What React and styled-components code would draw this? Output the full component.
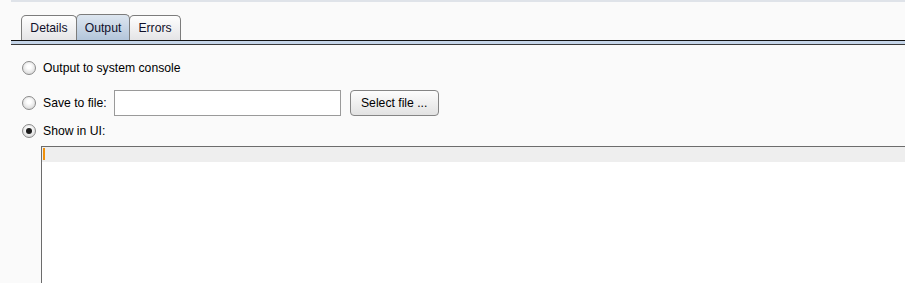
import React from "react"
import styled, { createGlobalStyle } from 'styled-components'

const GlobalStyle = createGlobalStyle`
    html, body {
        margin: 0;
        padding: 0;
        background: #fafafa;
        overflow: hidden;
    }
    body {
        font-family: "Liberation Sans", Arial, sans-serif;
        font-size: 12.2px;
        color: #000;
    }
`

const Page = styled.div`
    width: 905px;
    height: 283px;
    overflow: hidden;
`

const TopLine = styled.div`
    height: 2px;
    margin-left: 11px;
    background: #dfe3e9;
`

const TabStrip = styled.div`
    height: 38px;
    display: flex;
    align-items: flex-end;
    padding-left: 21px;
`

const Tab = styled.div`
    box-sizing: border-box;
    width: ${p => p.w}px;
    height: ${p => p.selected ? 26 : 25}px;
    margin-left: ${p => p.first ? 0 : -1}px;
    display: flex;
    align-items: center;
    justify-content: center;
    border: 1px solid #7c7c7c;
    border-bottom: none;
    border-radius: 5px 5px 0 0;
    background: ${p => p.selected
        ? 'linear-gradient(#dde6f0, #b3c5da)'
        : 'linear-gradient(#fefefe, #e4e4e6)'};
    color: #10102a;
    position: relative;
    z-index: ${p => p.selected ? 1 : 0};
`

const TabUnderline = styled.div`
    margin-left: 11px;
    height: 3px;
    border-top: 1px solid #111;
    border-bottom: 1px solid #3a3a3a;
    background: #c4d4e8;
`

const Options = styled.div`
    padding-left: 22px;
    display: flex;
    flex-direction: column;
`

const Row = styled.div`
    display: flex;
    align-items: center;
    height: ${p => p.h}px;
    margin-top: ${p => p.mt}px;
`

const Radio = styled.span`
    box-sizing: border-box;
    width: 14px;
    height: 14px;
    border-radius: 50%;
    border: 1px solid #8a8a8a;
    background: radial-gradient(circle at 50% 40%, #ffffff 20%, #e6e6e6 60%, #c9c9c9 100%);
    display: flex;
    align-items: center;
    justify-content: center;
    flex-shrink: 0;

    &::after {
        content: '';
        display: ${p => p.checked ? 'block' : 'none'};
        width: 6px;
        height: 6px;
        border-radius: 50%;
        background: #1c1c1c;
    }
`

const Label = styled.span`
    margin-left: 7px;
    white-space: nowrap;
`

const FileField = styled.div`
    box-sizing: border-box;
    width: 227px;
    height: 26px;
    margin-left: 7px;
    border: 1px solid #9a9a9a;
    background: #fff;
`

const Button = styled.div`
    box-sizing: border-box;
    width: 89px;
    height: 26px;
    margin-left: 9px;
    border: 1px solid #858585;
    border-radius: 4px;
    background: linear-gradient(#fdfdfd, #e2e2e2);
    display: flex;
    align-items: center;
    justify-content: center;
`

const TextArea = styled.div`
    margin-top: 6px;
    margin-left: 19px;
    margin-right: -10px;
    height: 150px;
    border: 1px solid #6c6c6c;
    border-right: none;
    background: #fff;
`

const CurrentLine = styled.div`
    height: 14px;
    background: #eeeeee;
    padding-top: 1px;
    padding-left: 1px;
`

const Caret = styled.div`
    width: 2px;
    height: 12px;
    background: #f0900a;
`

export default function App() {
    return (
        <Page>
            <GlobalStyle />
            <TopLine />
            <TabStrip>
                <Tab w={56} first>Details</Tab>
                <Tab w={54} selected>Output</Tab>
                <Tab w={52}>Errors</Tab>
            </TabStrip>
            <TabUnderline />
            <Options>
                <Row h={18} mt={14}>
                    <Radio />
                    <Label>Output to system console</Label>
                </Row>
                <Row h={26} mt={13}>
                    <Radio />
                    <Label>Save to file:</Label>
                    <FileField />
                    <Button>Select file ...</Button>
                </Row>
                <Row h={18} mt={6}>
                    <Radio checked />
                    <Label>Show in UI:</Label>
                </Row>
                <TextArea>
                    <CurrentLine>
                        <Caret />
                    </CurrentLine>
                </TextArea>
            </Options>
        </Page>
    )
}
